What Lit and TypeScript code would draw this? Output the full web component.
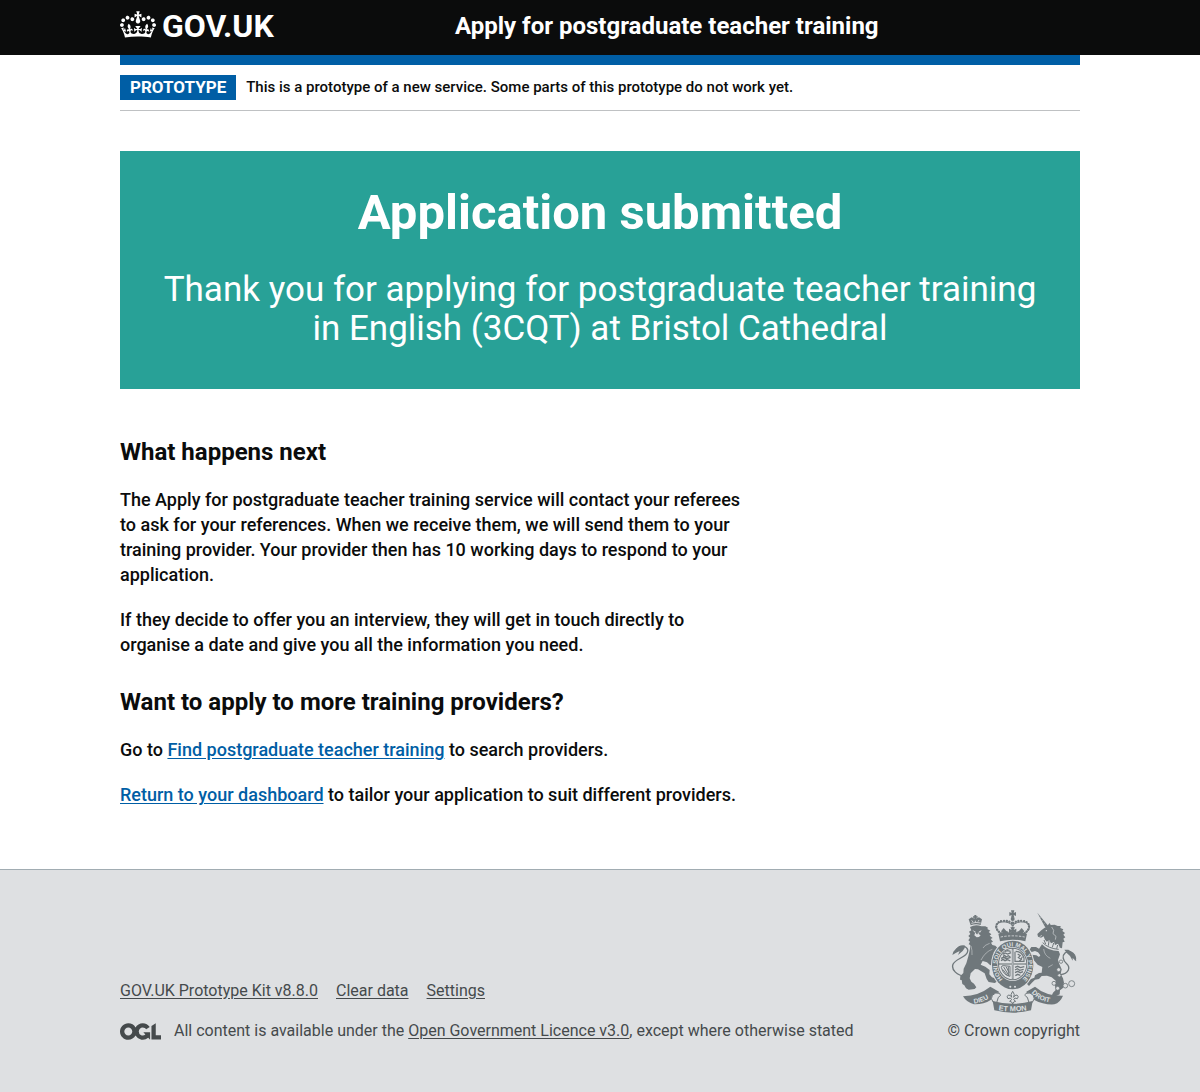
import { LitElement, html, css, svg } from "lit";
import { customElement } from "lit/decorators.js";

const crown = html`<svg class="crown" viewBox="0 0 132 97" aria-hidden="true">
  <path fill="currentColor" fill-rule="evenodd" d="M25 30.2c3.5 1.5 7.7-.2 9.1-3.7 1.5-3.6-.2-7.8-3.9-9.2-3.6-1.4-7.6.3-9.1 3.9-1.4 3.5.3 7.5 3.9 9zM9 39.5c3.6 1.5 7.8-.2 9.2-3.7 1.5-3.6-.2-7.8-3.9-9.1-3.6-1.5-7.6.2-9.1 3.8-1.4 3.5.3 7.5 3.8 9zM4.4 57.2c3.5 1.5 7.7-.2 9.1-3.8 1.5-3.6-.2-7.7-3.9-9.1-3.5-1.5-7.6.3-9.1 3.8-1.4 3.5.3 7.6 3.9 9.1zm38.3-21.4c3.5 1.5 7.7-.2 9.1-3.8 1.5-3.6-.2-7.7-3.9-9.1-3.6-1.5-7.6.3-9.1 3.8-1.3 3.6.4 7.7 3.9 9.1zm64.4-5.6c-3.6 1.5-7.8-.2-9.1-3.7-1.5-3.6.2-7.8 3.8-9.2 3.6-1.4 7.7.3 9.2 3.9 1.3 3.5-.4 7.5-3.9 9zm15.9 9.3c-3.6 1.5-7.7-.2-9.1-3.7-1.5-3.6.2-7.8 3.7-9.1 3.6-1.5 7.7.2 9.2 3.8 1.5 3.5-.3 7.5-3.8 9zm4.7 17.7c-3.6 1.5-7.8-.2-9.2-3.8-1.5-3.6.2-7.7 3.9-9.1 3.6-1.5 7.7.3 9.2 3.8 1.3 3.5-.4 7.6-3.9 9.1zM89.3 35.8c-3.6 1.5-7.8-.2-9.2-3.8-1.4-3.6.2-7.7 3.9-9.1 3.6-1.5 7.7.3 9.2 3.8 1.4 3.6-.3 7.7-3.9 9.1zM69.7 17.7l8.9 4.7V9.3l-8.9 2.8c-.2-.3-.5-.6-.9-.9L72.4 0H59.6l3.5 11.2c-.3.3-.6.5-.9.9l-8.8-2.8v13.1l8.8-4.7c.3.3.6.7.9.9l-5 15.4v.1c-.2.8-.4 1.6-.4 2.4 0 4.1 3.1 7.5 7 8.1h.2c.3 0 .7.1 1 .1.4 0 .7 0 1-.1h.2c4-.6 7.1-4.1 7.1-8.1 0-.8-.1-1.7-.4-2.4V34l-5.1-15.4c.4-.2.7-.6 1-.9zM66 92.8c16.9 0 32.8 1.1 47.1 3.2 4-16.9 8.9-26.7 14-33.5l-9.6-3.4c1 4.9 1.1 7.2 0 10.2-1.5-1.4-3-4.3-4.2-8.7L108.6 76c2.8-2 5-3.2 7.5-3.3-4.4 9.4-10 11.9-13.6 11.2-4.3-.8-6.3-4.6-5.6-7.9 1-4.7 5.7-5.9 8-.5 4.3-8.7-3-11.4-7.6-8.8 7.1-7.2 7.9-13.5 2.1-21.1-8 6.1-8.1 12.3-4.5 20.8-4.7-5.4-12.1-2.5-9.5 6.2 3.4-5.2 7.9-2 7.2 3.1-.6 4.3-6.4 7.8-13.5 7.2-10.3-.9-10.9-8-11.2-13.8 2.5-.5 7.1 1.8 11 7.3L80.2 60c-4.1 4.4-8 5.3-12.3 5.4 1.4-4.4 8-11.6 8-11.6H55.5s6.4 7.2 7.9 11.6c-4.2-.1-8-1-12.3-5.4l1.4 16.4c3.9-5.5 8.5-7.7 10.9-7.3-.3 5.8-.9 12.8-11.1 13.8-7.2.6-12.9-2.9-13.5-7.2-.7-5 3.8-8.3 7.1-3.1 2.7-8.7-4.6-11.6-9.4-6.2 3.7-8.5 3.6-14.7-4.6-20.8-5.8 7.6-5 13.9 2.2 21.1-4.7-2.6-11.9.1-7.7 8.8 2.3-5.5 7.1-4.2 8.1.5.7 3.3-1.3 7.1-5.7 7.9-3.5.7-9-1.8-13.5-11.2 2.5.1 4.7 1.3 7.5 3.3l-4.7-15.4c-1.2 4.4-2.7 7.2-4.3 8.7-1.1-3-.9-5.3 0-10.2l-9.5 3.4c5 6.9 9.9 16.7 14 33.5 14.8-2.1 30.8-3.2 47.7-3.2z"/>
</svg>`;

const ogl = html`<svg class="ogl" viewBox="0 0 483.2 195.7" aria-hidden="true">
  <path fill="currentColor" d="M421.5 142.8V.1l-50.7 32.3v161.1h112.4v-50.7zm-122.3-9.6A47.12 47.12 0 0 1 221 97.8c0-26 21.1-47.1 47.1-47.1 16.7 0 31.4 8.7 39.7 21.8l42.7-27.2A97.63 97.63 0 0 0 268.1 0c-36.5 0-68.3 20.1-85.1 49.7A98 98 0 0 0 97.8 0C43.9 0 0 43.9 0 97.8s43.9 97.8 97.8 97.8c36.5 0 68.3-20.1 85.1-49.7a97.76 97.76 0 0 0 149.6 25.4l19.4 22.2h3v-87.8h-80l24.3 27.5zM97.8 145c-26 0-47.1-21.1-47.1-47.1s21.1-47.1 47.1-47.1 47.1 21.1 47.1 47.1S123.8 145 97.8 145"/>
</svg>`;

const INK = "#6f777b";
const PAPER = "#dee0e2";

const royalCrown = svg`<g>
  <path fill="${INK}" d="M214 29h10l-2 8 7-3v12l-7-3 2 8h-10l2-8-7 3v-12l7 3z"/>
  <circle cx="219" cy="55" r="6" fill="${INK}"/>
  <path d="M190 103C160 88 164 66 186 64c14-2 26 3 33 11 7-8 19-13 33-11 22 2 26 24-4 39" fill="none" stroke="${INK}" stroke-width="3"/>
  <path d="M184 98C162 84 168 63 188 61c14-2 25 2 31 9 6-7 17-11 31-9 20 2 26 23 4 37" fill="none" stroke="${INK}" stroke-width="7" stroke-linecap="round" stroke-dasharray="0.100 8"/>
  <path d="M219 66v18" stroke="${INK}" stroke-width="7" stroke-linecap="round" stroke-dasharray="0.100 8"/>
  <path fill="${INK}" d="M212 80h14l-4 8 8-4v13l-8-4 4 10h-14l4-10-8 4V84l8 4zM192 82l8 9 6 2-4 8h-10l-8-9zM246 82l-8 9-6 2 4 8h10l8-9z"/>
  <path fill="${INK}" d="M176 99q43-10 86 0l-5 23q-38-10-76 0z"/>
  <path d="M183 109q36-7 72 0" fill="none" stroke="${PAPER}" stroke-width="2.500" stroke-dasharray="7 4"/>
</g>`;

const lion = svg`<g>
  <path d="M93 74l-6-18 9-6 10 5 12-5 9 6-4 17q-15-5-30 1z" fill="${INK}"/>
  <path fill="${INK}" d="M104 43h6v4h4v4h-4v5h-6v-5h-4v-4h4z"/>
  <path d="M95 68q14-5 28-1M96 59l4 5M118 58l-3 5M107 60v5" stroke="${PAPER}" stroke-width="2.500" fill="none"/>
  <path fill="${INK}" d="M91 79q17-9 34-2l12 0 8 4-2 4 9 5-5 4 8 7-5 4 9 7-6 3 7 8-6 3 4 7 9 2 7 7-2 11-11 3 9 11-6 4 4 12-3 14-14-4-9-8-13-4-6 11 14 6 13 10-1 13 8 9 13 4 4 8-9 5-18-3-6-9-6-17-20-12-9-1-13 13-3 15 5 10 8 6 7 11-5 5-18 2-8-4-5-9-6-4-2-12-5-1 1-11 9-9 1-13 8-16 6-21 5-22 1-12-5-2 4-8-5-4 5-8-5-5 6-6-4-7 7-4z"/>
  <path d="M98 88l10 5-2 3zM126 88l-9 5 4 3z" fill="${PAPER}"/>
  <path fill="${PAPER}" d="M107 95l-3 9 7 6 7-1 5-5-5-3-3-8-1 8-3 0z"/>
  <path d="M150 128q-16 5-20 14M94 136q4 13 3 27M158 146q-20 6-34 32" fill="none" stroke="${PAPER}" stroke-width="1.500"/>
  <path d="M78 228C52 224 34 208 40 191c5-13 28-19 38-29 10-9 8-22-6-25-12-2-20 6-24 15" fill="none" stroke="${INK}" stroke-width="4"/>
  <path d="M75 134l-16 2-10 8-8 9-3 10 10-6 12-6-5 12 14-12 6-9z" fill="${INK}"/>
  <path d="M60 264l-1 10M70 274l-2 9M86 276l-3 9M145 246l-3 8M160 247v8" stroke="${PAPER}" stroke-width="2"/>
</g>`;

const unicorn = svg`<g>
  <path fill="${INK}" d="M293 36l35 42-9 6z"/>
  <path d="M304 49l-4 4M311 58l-4 3M317 66l-5 4" stroke="${PAPER}" stroke-width="1"/>
  <path fill="${INK}" d="M317 82l8-9 5-6 3 6 12-1 9 4 9 0-1 6 9 4-3 5 8 6-5 5 6 8-6 4 4 9-6 2-2 18-28-8-22-14-5-14-8 4-9-3-2-8 12-11 10-8z"/>
  <circle cx="320" cy="90" r="2" fill="${PAPER}"/>
  <path d="M336 79l6 10-2 10 9 8-2 10M300 108l7-4" fill="none" stroke="${PAPER}" stroke-width="1.800"/>
  <path fill="${PAPER}" d="M308 122l7-6 6 7 8-4 5 9 9-4 3 9 9-4 5 10-3 8q-32-2-50-22z"/>
  <path d="M309 126q18 18 48 20M313 118l5 12M328 121l-2 14M342 127l-4 13M354 133l-3 11" fill="none" stroke="${INK}" stroke-width="3"/>
  <path fill="${INK}" d="M307 131q18 20 50 20l4 10-6 17 4 12 7 16-3 14 7 13 3 13-2 15-10 8-1 12-12 6-12-2 4-9 8-8-2-13 2-15-12-10-14-5-16 1-8 9-12 2-10 10-8 9-8-8 12-12 12-5 2-7 12-7 8-1 2-17-14-7-12-14-9-1-3 11 8 12-5 8-11-8-4-12 2-10-8-8-7-1-2-10 7-2-1-8 11-5 10 5 6 13 14 2 8 5 4-5-7-9-9-4-10 3-7-6 6-9 14 0 9 5z"/>
  <path d="M312 145q2 20 20 28M325 200l14-8" fill="none" stroke="${PAPER}" stroke-width="1.500"/>
  <path d="M362 222c26-3 31-22 19-33-12-10-14-24-5-32 9-8 24-4 29 7 3 6 3 10 2 15" fill="none" stroke="${INK}" stroke-width="4"/>
  <path fill="${INK}" d="M374 147l12 0 11 7 9 11 4 17-11-10 0 8-8-14-9-8z"/>
  <g fill="${PAPER}" stroke="${INK}" stroke-width="2.500">
    <circle cx="364" cy="183" r="5"/><circle cx="357" cy="207" r="6"/><circle cx="359" cy="224" r="5"/>
    <circle cx="343" cy="248" r="6"/><circle cx="354" cy="263" r="6"/><circle cx="377" cy="255" r="7"/><circle cx="396" cy="249" r="9"/>
  </g>
</g>`;

const garter = svg`<g>
  <ellipse cx="219" cy="193" rx="65" ry="76" fill="${PAPER}"/>
  <ellipse cx="219" cy="193" rx="62" ry="73" fill="${INK}"/>
  <ellipse cx="219" cy="190" rx="46" ry="51" fill="${PAPER}"/>
  <ellipse cx="219" cy="190" rx="44" ry="49" fill="${INK}"/>
  <ellipse cx="219" cy="190" rx="41" ry="46" fill="${PAPER}"/>
  <path id="motto-ring" fill="none" d="M199 242A47 55 0 1 1 239 242"/>
  <text class="motto" fill="${PAPER}" font-size="18"><textPath href="#motto-ring" startOffset="50%" text-anchor="middle">HONI SOIT QUI MAL Y PENSE</textPath></text>
  <path d="M219 142v94M178 190h82" stroke="${INK}" stroke-width="5"/>
  <path d="M219 146v88M180 190h78" stroke="${PAPER}" stroke-width="1.500"/>
  <path fill="none" stroke="${INK}" stroke-width="4" d="M189 161l7-4 8 3 10-4M190 167l5-3 4 5 7-4 6 4M184 173l8-3 8 4 13-4M184 180l6-4 6 4 8-3 8 4M196 152l8-2 9 2M226 200l8-3 8 4 12-3M226 208l7-4 7 5 12-3M226 216l8-4 8 4 8-3M227 225l7-4 8 3"/>
  <path d="M228 152q19 1 25 20v10h-27v-29M234 160l8 5-6 6 9 5-6 5M248 168l-5 9" fill="none" stroke="${INK}" stroke-width="3.500"/>
  <path d="M185 200q0-6 8-5l18 2v30q-20-3-26-27M192 199l15 25M199 198l10 18M190 207l12 16M206 198v28" fill="none" stroke="${INK}" stroke-width="3"/>
  <g fill="${PAPER}"><circle cx="212" cy="258" r="3"/><circle cx="226" cy="258" r="3"/></g>
</g>`;

const ribbon = svg`<g>
  <path fill="${INK}" d="M70 287q48-2 82-29l26 15q-4 11-17 12-5 5-8 13-22 14-50 13-22-5-33-24z"/>
  <path fill="${INK}" d="M370 285q-52 1-84-27l-26 15q4 11 16 12 5 5 8 13 28 15 60 13 18-6 26-26z"/>
  <path fill="${PAPER}" stroke="${INK}" stroke-width="3" d="M158 284q9-11 22-6 7 7-4 12l-5 16-10-1q-10-11-3-21zM281 284q-9-11-22-6-7 7 4 12l5 16 10-1q10-11 3-21z"/>
  <path fill="${INK}" d="M159 301q60 17 120 0l-5 28q-54 14-110 0z"/>
  <path fill="none" stroke="${INK}" stroke-width="3" d="M219 272q8 9 3 18 2-7 10-7 7 5 1 11l-7-2-4 5 6 5-6 2-3 6-3-6-6-2 6-5-4-5-7 2q-6-6 1-11 8 0 10 7-5-9 3-18z"/>
  <path id="motto-left" d="M103 308q34-3 56-24" fill="none"/>
  <path id="motto-mid" d="M166 327q53 10 106 0" fill="none"/>
  <path id="motto-right" d="M276 276q23 28 66 30" fill="none"/>
  <g class="motto" fill="${PAPER}">
    <text font-size="20"><textPath href="#motto-left">DIEU</textPath></text>
    <text font-size="22"><textPath href="#motto-mid" startOffset="50%" text-anchor="middle">ET MON</textPath></text>
    <text font-size="20"><textPath href="#motto-right">DROIT</textPath></text>
  </g>
</g>`;

const arms = html`<svg class="arms" viewBox="34 28 378 309" aria-hidden="true">${lion}${unicorn}${garter}${royalCrown}${ribbon}</svg>`;

@customElement("app-root")
export class AppRoot extends LitElement {
  static styles = css`
    :host {
      display: flex;
      flex-direction: column;
      min-height: 100vh;
      background: #fff;
      color: #0b0c0c;
      font-family: Roboto, "Liberation Sans", Arial, sans-serif;
      font-weight: 500;
      font-size: 18px;
      line-height: 25px;
    }
    * { box-sizing: border-box; }
    h1, h2, p, ul { margin: 0; padding: 0; }
    .container { max-width: 960px; margin: 0 auto; width: calc(100% - 30px); }
    .header { background: #0b0c0c; color: #fff; }
    .header-row { display: flex; align-items: center; min-height: 55px; padding-bottom: 3px; }
    .header a { color: #fff; text-decoration: none; font-weight: 700; }
    .logo-cell { flex: 0 0 calc(33.33% + 15px); }
    .header .logo { display: flex; align-items: flex-start; gap: 6px; font-size: 32px; line-height: 30px; }
    .crown { width: 36px; height: 27px; display: block; }
    .service { font-size: 24px; line-height: 30px; }
    .stripe { border-top: 10px solid #005ea5; }
    .phase {
      display: flex; align-items: center; gap: 10px;
      padding: 10px 0; border-bottom: 1px solid #bfc1c3;
      font-size: 15px;
    }
    .tag {
      background: #005ea5; color: #fff; padding: 0 10px;
      font-size: 17px; font-weight: 700; text-transform: uppercase;
    }
    main { display: block; padding: 40px 0 42px; }
    .panel {
      background: #28a197; color: #fff; text-align: center;
      padding: 40px; margin-bottom: 48px;
      font-size: 35px; line-height: 39px; font-weight: 400;
    }
    .panel h1 { font-size: 49px; line-height: 44px; font-weight: 700; margin-bottom: 35px; }
    .panel p { margin-bottom: 1px; }
    .column { max-width: 630px; }
    h2 { font-size: 24px; line-height: 30px; font-weight: 700; }
    .column h2 { margin-bottom: 20px; }
    .column p { margin-bottom: 20px; }
    .column p + h2 { margin-top: 30px; }
    .column a { color: #005ea5; text-underline-offset: 2px; }
    .footer {
      flex: 1 0 auto; background: #dee0e2; border-top: 1px solid #a1acb2;
      color: #454a4c; padding: 40px 0; font-size: 16px; line-height: 20px; font-weight: 400;
    }
    .footer a { color: inherit; text-underline-offset: 2px; }
    .footer-row { display: flex; align-items: flex-end; justify-content: space-between; gap: 30px; }
    .links { display: flex; flex-wrap: wrap; gap: 18px; list-style: none; margin-bottom: 20px; }
    .licence { display: flex; align-items: center; gap: 13px; }
    .ogl { width: 41px; height: 17px; flex: none; display: block; }
    .footer .copyright {
      display: flex; flex-direction: column; align-items: center; gap: 8px;
      text-decoration: none; white-space: nowrap;
    }
    .arms { width: 126px; height: 103px; display: block; }
    .motto { font-family: "Liberation Sans", Arial, sans-serif; font-weight: 700; }
  `;

  render() {
    return html`
      <header class="header">
        <div class="container header-row">
          <div class="logo-cell"><a class="logo" href="#">${crown}<span>GOV.UK</span></a></div>
          <a class="service" href="#">Apply for postgraduate teacher training</a>
        </div>
      </header>
      <div class="container stripe">
        <div class="phase">
          <strong class="tag">Prototype</strong>
          <span>This is a prototype of a new service. Some parts of this prototype do not work yet.</span>
        </div>
        <main>
          <div class="panel">
            <h1>Application submitted</h1>
            <p>Thank you for applying for postgraduate teacher training in English (3CQT) at Bristol Cathedral</p>
          </div>
          <div class="column">
            <h2>What happens next</h2>
            <p>The Apply for postgraduate teacher training service will contact your referees to ask for your references. When we receive them, we will send them to your training provider. Your provider then has 10 working days to respond to your application.</p>
            <p>If they decide to offer you an interview, they will get in touch directly to organise a date and give you all the information you need.</p>
            <h2>Want to apply to more training providers?</h2>
            <p>Go to <a href="#">Find postgraduate teacher training</a> to search providers.</p>
            <p><a href="#">Return to your dashboard</a> to tailor your application to suit different providers.</p>
          </div>
        </main>
      </div>
      <footer class="footer">
        <div class="container footer-row">
          <div>
            <ul class="links">
              <li><a href="#">GOV.UK Prototype Kit v8.8.0</a></li>
              <li><a href="#">Clear data</a></li>
              <li><a href="#">Settings</a></li>
            </ul>
            <div class="licence">
              ${ogl}
              <span>All content is available under the <a href="#">Open Government Licence v3.0</a>, except where otherwise stated</span>
            </div>
          </div>
          <a class="copyright" href="#">${arms}<span>© Crown copyright</span></a>
        </div>
      </footer>
    `;
  }
}
